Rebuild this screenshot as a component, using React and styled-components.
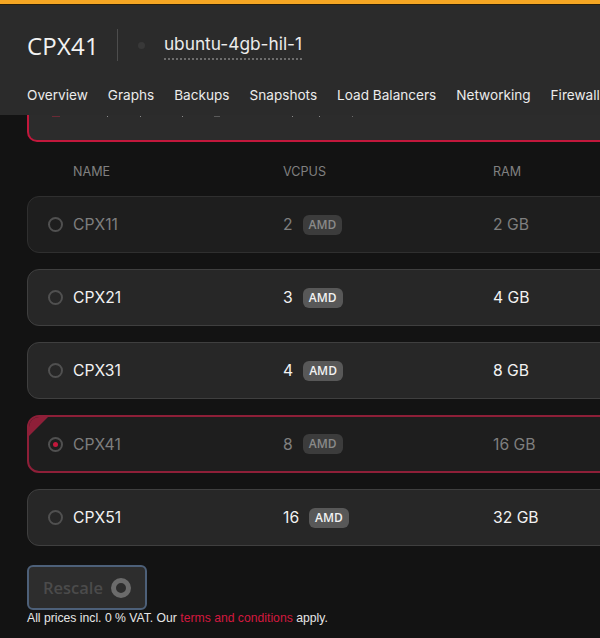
import styled, { createGlobalStyle } from "styled-components";

const GlobalStyle = createGlobalStyle`
  html, body {
    margin: 0;
    padding: 0;
    background: #131313;
    overflow: hidden;
  }
  body {
    font-family: Inter, "Liberation Sans", sans-serif;
  }
`;

const Page = styled.div`
  width: 600px;
  height: 638px;
  overflow: hidden;
  background: #131313;
`;

const TopBar = styled.div`
  height: 4px;
  background: #f5a623;
  border-bottom: 1px solid #2a1e0a;
`;

const Header = styled.header`
  height: 110px;
  box-sizing: border-box;
  background: #2b2b2b;
  padding: 24px 0 0 27px;
`;

const TitleRow = styled.div`
  display: flex;
  align-items: center;
  height: 32px;
`;

const Title = styled.h1`
  margin: 0;
  font-family: "Open Sans", Inter, sans-serif;
  font-size: 24px;
  font-weight: 400;
  color: #f2f2f2;
  letter-spacing: 0.2px;
`;

const Divider = styled.div`
  width: 1px;
  height: 32px;
  margin: 0 20px 0 18px;
  background: #4d4d4d;
`;

const Dot = styled.div`
  width: 7px;
  height: 7px;
  margin-right: 19px;
  border-radius: 50%;
  background: #383838;
`;

const ServerName = styled.div`
  font-size: 17.3px;
  color: #ececec;
  line-height: 25px;
  padding-bottom: 2px;
  border-bottom: 2px dotted #6d6d6d;
`;

const Tabs = styled.nav`
  display: flex;
  gap: 20px;
  margin-top: 24px;
  white-space: nowrap;
`;

const Tab = styled.div`
  font-size: 13.6px;
  line-height: 20px;
  color: #ececec;
`;

const CardTail = styled.div`
  display: flex;
  align-items: flex-start;
  height: 27px;
  margin-left: 27px;
  width: 700px;
  box-sizing: border-box;
  background: #2c2c2c;
  border: 2px solid #c2183c;
  border-top: none;
  border-radius: 0 0 10px 10px;
`;

const Speck = styled.span`
  width: ${(p) => p.$w}px;
  height: 1px;
  margin: 1px 0 0 ${(p) => p.$gap}px;
  background: ${(p) => p.$color};
`;

const Table = styled.div`
  width: 700px;
  margin-left: 27px;
`;

const HeadRow = styled.div`
  display: grid;
  grid-template-columns: 46px 210px 210px 1fr;
  height: 54px;
  padding-top: 4px;
  align-items: center;
  font-size: 12.6px;
  color: #808080;
  box-sizing: border-box;
`;

const HeadCell = styled.div`
  grid-column: ${(p) => p.col};
`;

const Rows = styled.div`
  display: flex;
  flex-direction: column;
  gap: 16px;
`;

const Row = styled.div`
  position: relative;
  display: grid;
  grid-template-columns: ${(p) => (p.$selected ? "44px" : "45px")} 210px 210px 1fr;
  align-items: center;
  height: ${(p) => (p.$selected ? "58px" : "57px")};
  box-sizing: border-box;
  border-radius: 12px;
  overflow: hidden;
  border: ${(p) => (p.$selected ? "2px solid #8e1f38" : p.$disabled ? "1px solid #2f2f2f" : "1px solid #3f3f3f")};
  background: ${(p) => (p.$disabled ? "#1e1e1e" : "#272727")};
  color: ${(p) => (p.$disabled ? "#7f7f7f" : "#f2f2f2")};
  font-size: 15.7px;
`;

const Corner = styled.div`
  position: absolute;
  left: 0;
  top: 0;
  width: 0;
  height: 0;
  border-top: 19px solid #8e1f38;
  border-right: 19px solid transparent;
`;

const Radio = styled.div`
  justify-self: start;
  margin-left: ${(p) => (p.$checked ? "19px" : "20px")};
  width: 15px;
  height: 15px;
  box-sizing: border-box;
  border-radius: 50%;
  border: 2px solid #505050;
  display: flex;
  align-items: center;
  justify-content: center;
  &::after {
    content: "";
    display: ${(p) => (p.$checked ? "block" : "none")};
    width: 5px;
    height: 5px;
    border-radius: 50%;
    background: #c2183c;
  }
`;

const Cpu = styled.div`
  display: flex;
  align-items: center;
  gap: 10px;
`;

const Badge = styled.span`
  font-family: "Open Sans", Inter, sans-serif;
  font-size: 12px;
  font-weight: 600;
  line-height: 20px;
  padding: 0 6px;
  border-radius: 6px;
  background: ${(p) => (p.$disabled ? "#3c3c3c" : "#585858")};
  color: ${(p) => (p.$disabled ? "#8a8a8a" : "#f2f2f2")};
`;

const RescaleButton = styled.button`
  display: flex;
  align-items: center;
  gap: 8px;
  width: 120px;
  height: 45px;
  margin: 19px 0 0 27px;
  padding: 0 0 0 14px;
  box-sizing: border-box;
  border: 2px solid #4d6079;
  border-radius: 6px;
  background: #2d2d2d;
  color: #4b4b4b;
  font-family: "Open Sans", Inter, sans-serif;
  font-size: 16.5px;
  font-weight: 600;
`;

const Spinner = styled.span`
  width: 20px;
  height: 20px;
  box-sizing: border-box;
  border-radius: 50%;
  border: 5px solid #6b6b6b;
`;

const Note = styled.p`
  margin: 1px 0 0 27px;
  font-family: "Liberation Sans", Arial, sans-serif;
  font-size: 12.2px;
  line-height: 15px;
  color: #e6e6e6;
`;

const TermsLink = styled.span`
  color: #d3193f;
`;

const tabs = ["Overview", "Graphs", "Backups", "Snapshots", "Load Balancers", "Networking", "Firewalls"];

const specks = [
  { gap: 23, w: 8, color: "#6b2a35" },
  { gap: 47, w: 1, color: "#8a8a8a" },
  { gap: 32, w: 1, color: "#8a8a8a" },
  { gap: 41, w: 1, color: "#8a8a8a" },
  { gap: 31, w: 6, color: "#5a5a5a" },
  { gap: 72, w: 1, color: "#8a8a8a" },
  { gap: 26, w: 1, color: "#8a8a8a" },
  { gap: 32, w: 1, color: "#6a6a6a" },
];

const plans = [
  { name: "CPX11", cpus: 2, ram: "2 GB", disabled: true },
  { name: "CPX21", cpus: 3, ram: "4 GB" },
  { name: "CPX31", cpus: 4, ram: "8 GB" },
  { name: "CPX41", cpus: 8, ram: "16 GB", disabled: true, selected: true },
  { name: "CPX51", cpus: 16, ram: "32 GB" },
];

const App = () => {
  return (
    <Page>
      <GlobalStyle />
      <TopBar />
      <Header>
        <TitleRow>
          <Title>CPX41</Title>
          <Divider />
          <Dot />
          <ServerName>ubuntu-4gb-hil-1</ServerName>
        </TitleRow>
        <Tabs>
          {tabs.map((t) => (
            <Tab key={t}>{t}</Tab>
          ))}
        </Tabs>
      </Header>
      <CardTail>
        {specks.map((s, i) => (
          <Speck key={i} $gap={s.gap} $w={s.w} $color={s.color} />
        ))}
      </CardTail>
      <Table>
        <HeadRow>
          <HeadCell col={2}>NAME</HeadCell>
          <HeadCell col={3}>VCPUS</HeadCell>
          <HeadCell col={4}>RAM</HeadCell>
        </HeadRow>
        <Rows>
          {plans.map((p) => (
            <Row key={p.name} $disabled={p.disabled} $selected={p.selected}>
              {p.selected && <Corner />}
              <Radio $checked={p.selected} />
              <div>{p.name}</div>
              <Cpu>
                {p.cpus}
                <Badge $disabled={p.disabled}>AMD</Badge>
              </Cpu>
              <div>{p.ram}</div>
            </Row>
          ))}
        </Rows>
      </Table>
      <RescaleButton disabled>
        Rescale
        <Spinner />
      </RescaleButton>
      <Note>
        All prices incl. 0 % VAT. Our <TermsLink>terms and conditions</TermsLink> apply.
      </Note>
    </Page>
  );
};

export default App;
